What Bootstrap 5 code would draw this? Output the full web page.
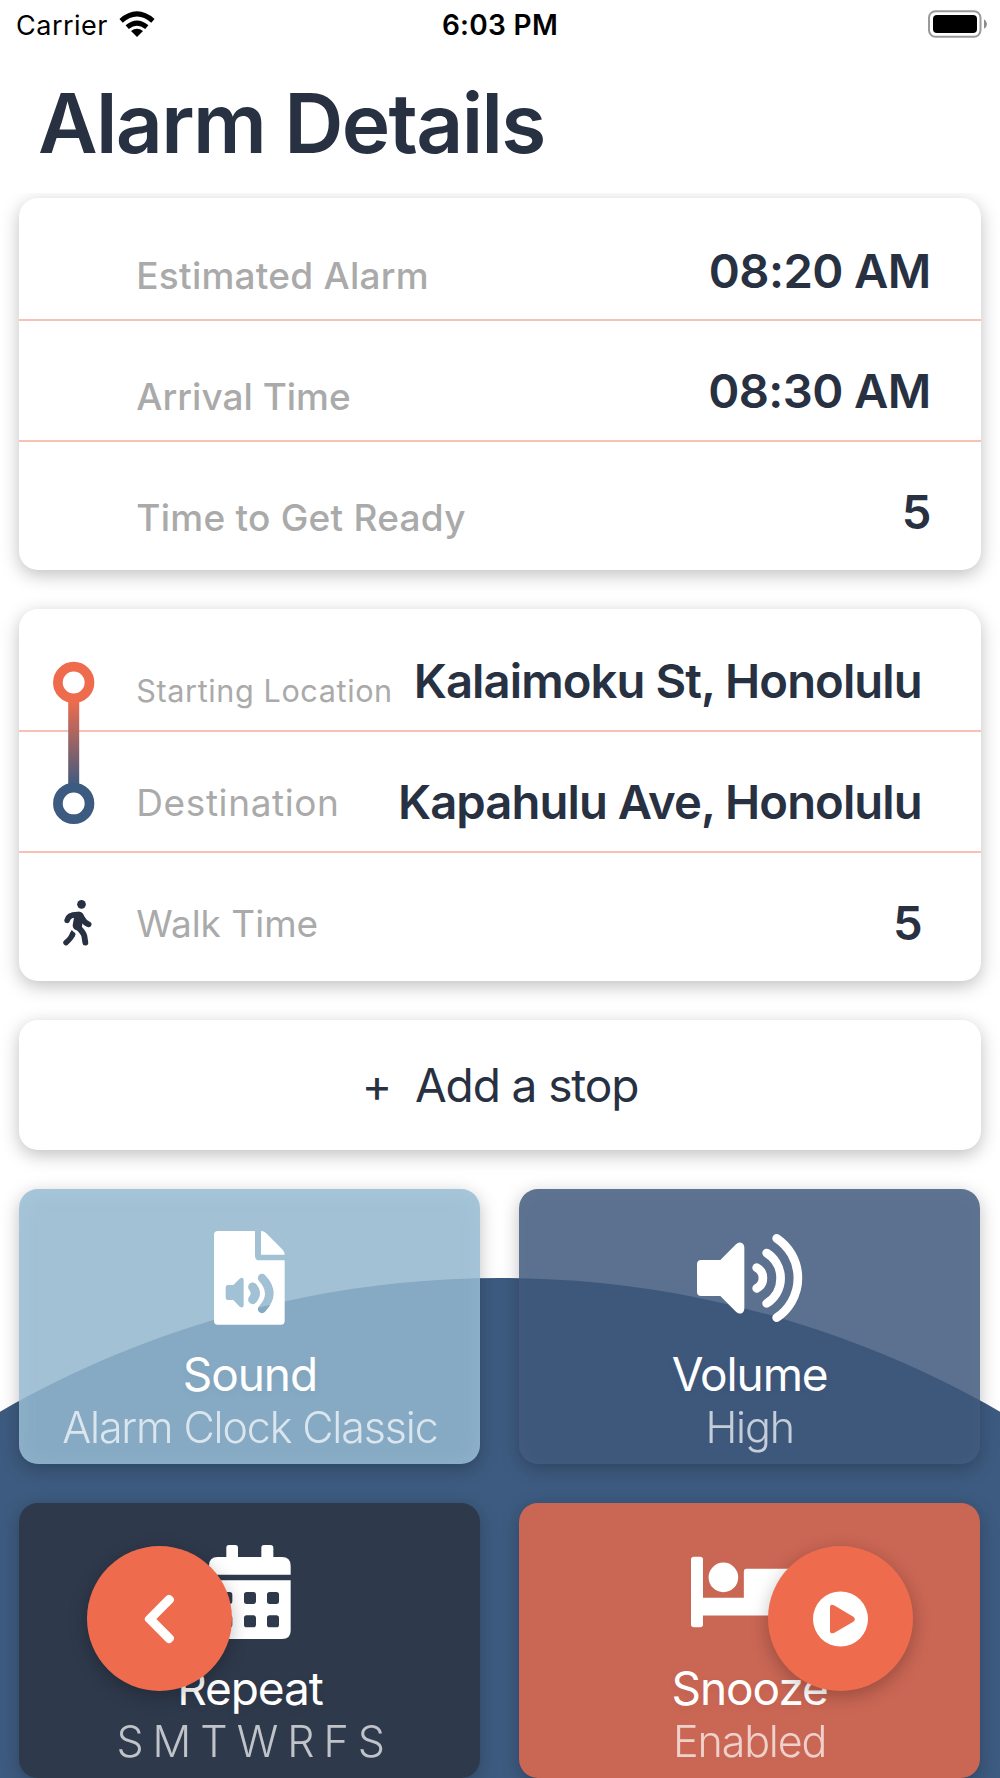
<!DOCTYPE html>
<html lang="en">
<head>
<meta charset="utf-8">
<meta name="viewport" content="width=device-width, initial-scale=1">
<title>Alarm Details</title>
<link href="https://cdn.jsdelivr.net/npm/bootstrap@5.3.0/dist/css/bootstrap.min.css" rel="stylesheet">
<style>
  :root { --ink:#283142; --coral:#ee6c4d; --navy:#3d5b80; --soft:0 5px 18.5px rgba(0,0,0,.25); }
  body { font-family:Inter,"Liberation Sans",sans-serif; color:var(--ink); background:#fff; }
  .screen { width:1000px; height:1778px; }
  .statusbar { height:50px; padding:0 13px 0 16px; color:#000; font-size:27px; line-height:51px; }
  .carrier { letter-spacing:.5px; }
  .wifi { margin-left:10px; }
  .clock { font-size:28px; font-weight:600; letter-spacing:.3px; }
  .page-title { height:143px; padding:24px 0 0 38px; margin:0; font-size:82px; line-height:100px; font-weight:600; letter-spacing:-1.65px; }
  .scroller { height:1585px; padding:5px 19.3px 0; }
  .hill { left:-502px; top:1278px; width:2004px; height:2004px; background:var(--navy); }
  .panel { border-radius:19px; box-shadow:var(--soft); background:#fff; margin-bottom:39px; height:372px; }
  .line-row { height:121px; padding:45px 50px 0 117px; border-bottom:2px solid #f9c0b3; line-height:50px; white-space:nowrap; }
  .line-row:first-child { height:123px; padding-top:47.5px; }
  .line-row:nth-child(3) { height:128px; border-bottom:0; }
  .route .line-row { padding-right:59px; }
  .route .line-row:first-child { padding-top:47px; }
  .caption-text { font-size:37px; font-weight:500; color:#aaa; margin-top:5.5px; letter-spacing:.25px; }
  .route .caption-text { font-weight:400; margin-top:.5px; letter-spacing:.6px; }
  .route .caption-sm { font-size:30.6px; margin-top:10px; }
  .caption-text.snug, .route .caption-text.snug { letter-spacing:0; }
  .figure-text { font-size:47.2px; font-weight:600; letter-spacing:-.6px; }
  .route .figure-text { letter-spacing:-.92px; }
  .track { left:33px; top:52px; }
  .walker { left:43px; top:290px; }
  .add-stop { height:130px; border-radius:19px; box-shadow:var(--soft); background:#fff; font-size:46px; gap:24px; margin-bottom:39px; color:var(--ink); border:0; line-height:50px; letter-spacing:-1.1px; padding-bottom:2px; }
  .tiles { column-gap:38.6px; row-gap:39px; }
  .tile { width:461.2px; height:275px; border-radius:19px; color:#fff; padding-top:42px; box-shadow:var(--soft); }
  .tile svg { height:94px; }
  .tile-name { font-size:46px; line-height:50px; margin-top:24px; letter-spacing:-1.1px; text-shadow:0 3px 8px rgba(0,0,0,.05); }
  .tile-info { font-size:43px; line-height:50px; font-weight:300; opacity:.7; margin-top:3px; letter-spacing:-1.15px; }
  .weekdays { letter-spacing:-1.55px; }
  .t-sky { background:rgba(147,183,206,.86); box-shadow:var(--soft), inset 0 3px 22px rgba(190,225,245,.2); }
  .t-navy { background:rgba(62,88,123,.85); box-shadow:var(--soft), inset 0 3px 20px rgba(255,255,255,.03); }
  .t-ink { background:#2e394b; }
  .t-coral { background:#ca6654; }
  .fab { width:145px; height:145px; top:1546px; background:var(--coral); box-shadow:var(--soft); border:0; padding:0; }
  .fab-back { left:87px; }
  .fab-play { left:768px; }
</style>
</head>
<body>
<div class="screen position-relative overflow-hidden">
  <div class="hill position-absolute rounded-circle"></div>

  <header class="position-relative">
    <div class="statusbar d-flex justify-content-between align-items-start position-relative">
      <div class="d-flex align-items-start">
        <span class="carrier">Carrier</span>
        <svg class="wifi" width="38" height="50" viewBox="0 0 38 50"><g transform="translate(19 37)"><path d="M0 0L-6-6Q0-10.500 6-6Z"/><path d="M-9.800-9.800Q0-18 9.800-9.800M-15.900-16.200Q0-30 15.900-16.200" fill="none" stroke="#000" stroke-width="5"/></g></svg>
      </div>
      <span class="clock position-absolute start-50 translate-middle-x">6:03 PM</span>
      <svg width="59" height="50" viewBox="0 0 59 50"><rect x="1" y="11.200" width="51.500" height="25.600" rx="6.500" fill="none" stroke="#999" stroke-width="2"/><rect x="5" y="15" width="44" height="18" rx="4"/><path d="M56 19.300Q59 21 59 24T56 28.700Z" fill="#8c8c8c"/></svg>
    </div>
    <h1 class="page-title">Alarm Details</h1>
  </header>

  <main class="scroller position-relative overflow-hidden">
    <section class="panel">
      <div class="line-row d-flex justify-content-between align-items-start"><span class="caption-text">Estimated Alarm</span><span class="figure-text">08:20 AM</span></div>
      <div class="line-row d-flex justify-content-between align-items-start"><span class="caption-text snug">Arrival Time</span><span class="figure-text">08:30 AM</span></div>
      <div class="line-row d-flex justify-content-between align-items-start"><span class="caption-text">Time to Get Ready</span><span class="figure-text">5</span></div>
    </section>

    <section class="panel route position-relative">
      <div class="line-row d-flex justify-content-between align-items-start"><span class="caption-text caption-sm">Starting Location</span><span class="figure-text">Kalaimoku St, Honolulu</span></div>
      <div class="line-row d-flex justify-content-between align-items-start"><span class="caption-text">Destination</span><span class="figure-text">Kapahulu Ave, Honolulu</span></div>
      <div class="line-row d-flex justify-content-between align-items-start"><span class="caption-text snug">Walk Time</span><span class="figure-text">5</span></div>
      <svg class="track position-absolute" width="44" height="166" viewBox="0 0 44 166">
        <defs><linearGradient id="fade" x1="0" y1="0" x2="0" y2="1"><stop offset="0" stop-color="#ee6c4d"/><stop offset="1" stop-color="#3d5b80"/></linearGradient></defs>
        <rect x="16.200" y="40" width="11" height="85" fill="url(#fade)"/>
        <circle cx="21.700" cy="21.500" r="15.800" fill="#fff" stroke="#ee6c4d" stroke-width="9.700"/>
        <circle cx="21.700" cy="142.400" r="15.800" fill="#fff" stroke="#3d5b80" stroke-width="9.700"/>
      </svg>
      <svg class="walker position-absolute" width="30" height="48" viewBox="185 927 90 144" fill="none" stroke="#283142" stroke-linecap="round" stroke-linejoin="round">
        <circle cx="243.500" cy="943" r="13" fill="#283142" stroke="none"/>
        <path d="M200.500 991Q204 973 234 974Q241 975 245 984Q251 997 265 1003" stroke-width="17"/>
        <path d="M236 979L231 1007" stroke-width="28"/>
        <path d="M231 1009Q250 1028 252 1038L255 1058" stroke-width="17.500"/>
        <path d="M197 1058Q212 1045 216 1034" stroke-width="16.500"/>
        <path d="M214 1020L226 1032L222 1042L208 1032Z" fill="#283142" stroke="none"/>
      </svg>
    </section>

    <button class="add-stop w-100 d-flex justify-content-center align-items-center" type="button"><span>+</span><span>Add a stop</span></button>

    <section class="tiles d-flex flex-wrap">
      <article class="tile t-sky d-flex flex-column align-items-center">
        <svg width="71" viewBox="645 183 213 282">
          <mask id="sheet"><rect x="640" y="180" width="225" height="290" fill="#fff"/>
            <path d="M687 345H703L722 326Q732 319 734 329V407Q732 416 722 410L703 390H687Q680 390 680 382V353Q680 345 687 345Z"/>
            <path d="M761 351Q777 370 761 389" fill="none" stroke="#000" stroke-width="27" stroke-linecap="round"/>
            <path d="M789 324Q833 370 789 417" fill="none" stroke="#000" stroke-width="25" stroke-linecap="round"/></mask>
          <path d="M657 183H768V257Q768 271 782 271H857V453Q857 464 846 464H656Q645 464 645 453V194Q645 183 657 183ZM786 183Q795 183 801 189L851 239Q857 245 857 254H786Z" fill="#fff" mask="url(#sheet)"/>
        </svg>
        <div class="tile-name">Sound</div><div class="tile-info">Alarm Clock Classic</div>
      </article>
      <article class="tile t-navy d-flex flex-column align-items-center">
        <svg width="106" viewBox="592 183 318 282" fill="none" stroke="#fff" stroke-width="26" stroke-linecap="round">
          <path d="M605 270H662L709 223Q718 214 728 220Q734 225 734 232V416Q734 424 728 429Q718 434 709 425L662 378H605Q592 378 592 365V283Q592 270 605 270Z" fill="#fff" stroke="none"/>
          <path d="M771 293A35 35 0 0 1 771 355M801 249A89 89 0 0 1 801 400M831 205A143 143 0 0 1 831 443"/>
        </svg>
        <div class="tile-name">Volume</div><div class="tile-info">High</div>
      </article>
      <article class="tile t-ink d-flex flex-column align-items-center">
        <svg width="82" viewBox="627 225 246 282" fill="#fff">
          <path d="M627 314V287Q627 261 653 261H679V233Q679 225 687 225H706Q714 225 714 233V261H784V233Q784 225 792 225H811Q820 225 820 233V261H846Q872 261 872 287V314Z"/>
          <path fill-rule="evenodd" d="M627 331H872V482Q872 507 846 507H653Q627 507 627 482ZM669 366h20q8 0 8 8v20q0 8-8 8h-20q-8 0-8-8v-20q0-8 8-8zM740 366h20q8 0 8 8v20q0 8-8 8h-20q-8 0-8-8v-20q0-8 8-8zM809 366h20q8 0 8 8v20q0 8-8 8h-20q-8 0-8-8v-20q0-8 8-8zM669 436h20q8 0 8 8v20q0 8-8 8h-20q-8 0-8-8v-20q0-8 8-8zM740 436h20q8 0 8 8v20q0 8-8 8h-20q-8 0-8-8v-20q0-8 8-8zM809 436h20q8 0 8 8v20q0 8-8 8h-20q-8 0-8-8v-20q0-8 8-8z"/>
        </svg>
        <div class="tile-name">Repeat</div><div class="tile-info weekdays">S M T W R F S</div>
      </article>
      <article class="tile t-coral d-flex flex-column align-items-center">
        <svg width="117" viewBox="574 225 352 282" fill="#fff">
          <path d="M583 260H602Q610 260 610 268V383H733V304Q733 296 741 296H865Q926 296 926 357V464Q926 472 918 472H899Q891 472 891 464V437H610V464Q610 472 602 472H583Q574 472 574 464V268Q574 260 583 260Z"/><circle cx="671.500" cy="322" r="44.500"/>
        </svg>
        <div class="tile-name">Snooze</div><div class="tile-info">Enabled</div>
      </article>
    </section>
  </main>

  <button class="fab fab-back position-absolute rounded-circle d-flex" type="button" aria-label="Back">
    <svg width="145" height="145" viewBox="261 228 435 435"><path d="M437 440L498 379Q507 370 516 379Q527 388 519 397L469 447L519 497Q527 506 516 515Q507 524 498 515L437 454Q431 447 437 440Z" fill="#fff"/></svg>
  </button>
  <button class="fab fab-play position-absolute rounded-circle d-flex" type="button" aria-label="Play">
    <svg width="145" height="145" viewBox="804 228 435 435"><circle cx="1021.500" cy="447" r="82.500" fill="#fff"/><path d="M990 413Q990 400 1002 406L1060 440Q1069 447 1060 455L1002 489Q990 493 990 482Z" fill="#ee6c4d"/></svg>
  </button>
</div>
<script src="https://cdn.jsdelivr.net/npm/bootstrap@5.3.0/dist/js/bootstrap.bundle.min.js"></script>
</body>
</html>
